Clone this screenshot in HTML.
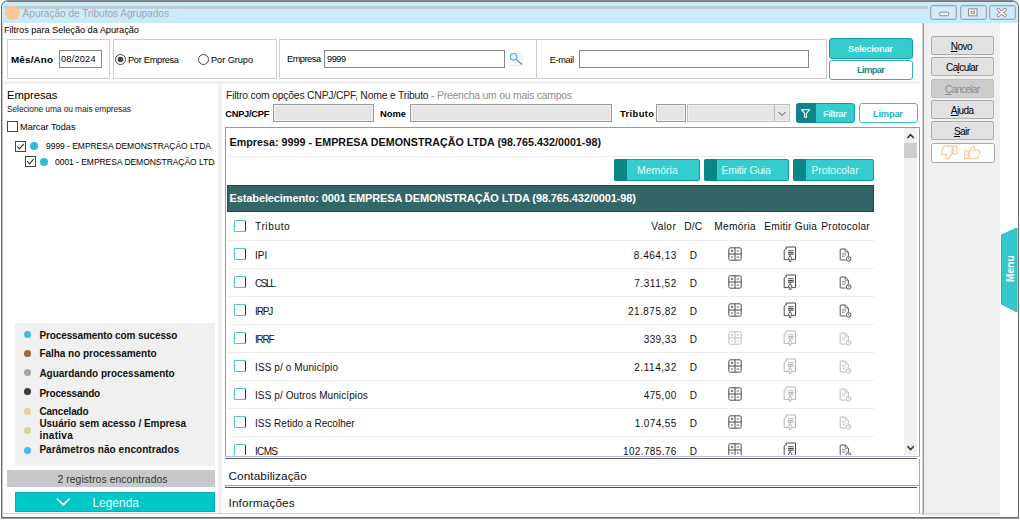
<!DOCTYPE html>
<html lang="pt-BR"><head><meta charset="utf-8"><title>Apuração de Tributos Agrupados</title>
<style>
html,body{margin:0;padding:0;background:#fff}
#w{position:relative;width:1020px;height:520px;overflow:hidden;font-family:'Liberation Sans', sans-serif}
#w div,#w svg,#w span{position:absolute}
#w span{white-space:nowrap;line-height:14px;height:14px}
#w u{text-decoration-thickness:1px;text-underline-offset:1px}
</style></head><body><div id="w">
<div style="left:1px;top:0px;width:1016px;height:516px;border:1px solid #6b6b6b;border-top-color:#8a8a8a;border-radius:7px 7px 0 0;background:#fff;box-sizing:content-box;box-shadow:inset 1px 0 0 #c4c4c4,inset 0 1px 0 #7a7a7a,0 1px 0 #9a9a9a"></div>
<div style="left:2px;top:2px;width:1016px;height:21px;background:#c9ecfc;border-radius:5px 5px 0 0"></div>
<div style="left:4px;top:6px;width:924px;height:3px;background:linear-gradient(#bfd0c0,#c4cfd0 70%,#c9c8ee)"></div>
<div style="left:5px;top:5.5px;width:14.5px;height:14.5px;background:#fdc795;border-radius:50%"></div>
<span style="left:22.6px;top:6.75px;font-size:10.2px;letter-spacing:-0.069px;color:#a3a7aa">Apuração de Tributos Agrupados</span>
<div style="left:930px;top:5px;width:27px;height:15px;border:1px solid #a3a3a3;border-radius:2.5px;box-sizing:border-box;background:#cfeafb;box-shadow:inset 0 0 0 1px #c4d6e0"></div>
<div style="left:960px;top:5px;width:27px;height:15px;border:1px solid #a3a3a3;border-radius:2.5px;box-sizing:border-box;background:#cfeafb;box-shadow:inset 0 0 0 1px #c4d6e0"></div>
<div style="left:989px;top:5px;width:27px;height:15px;border:1px solid #a3a3a3;border-radius:2.5px;box-sizing:border-box;background:#cfeafb;box-shadow:inset 0 0 0 1px #c4d6e0"></div>
<svg style="left:930px;top:5px" width="86" height="16" viewBox="0 0 86 16"><rect x="9.6" y="7.3" width="9" height="3.4" rx="1.4" fill="#fff" stroke="#8f8f8f" stroke-width="1.1"/><rect x="38.6" y="3.9" width="8.4" height="6.9" fill="#fff" stroke="#8f8f8f" stroke-width="1.1"/><rect x="41.2" y="6.2" width="3.4" height="2.4" fill="#d5e8f5" stroke="#8f8f8f" stroke-width=".9"/><path d="M68.3 4.6 L75.1 10.4 M75.1 4.6 L68.3 10.4" stroke="#8f8f8f" stroke-width="3.4" stroke-linecap="round"/><path d="M68.3 4.6 L75.1 10.4 M75.1 4.6 L68.3 10.4" stroke="#fff" stroke-width="1.5" stroke-linecap="round"/></svg>
<span style="left:4px;top:23.25px;font-size:9.3px;letter-spacing:-0.08px;color:#000">Filtros para Seleção da Apuração</span>
<div style="left:7px;top:39px;width:103px;height:40px;border:1px solid #cecece;box-sizing:border-box;background:#fff"></div>
<div style="left:113px;top:39px;width:164px;height:40px;border:1px solid #cecece;box-sizing:border-box;background:#fff"></div>
<div style="left:279px;top:39px;width:258px;height:40px;border:1px solid #cecece;box-sizing:border-box;background:#fff"></div>
<div style="left:536px;top:39px;width:291px;height:40px;border:1px solid #cecece;box-sizing:border-box;background:#fff"></div>
<span style="left:11px;top:52.75px;font-size:9.9px;letter-spacing:0.141px;font-weight:bold;color:#000">Mês/Ano</span>
<div style="left:59px;top:50px;width:43px;height:18px;border:1px solid #858585;box-sizing:border-box;background:#fff"></div>
<span style="left:61px;top:52.25px;font-size:9.2px;letter-spacing:0.214px;color:#000">08/2024</span>
<svg style="left:114px;top:53px" width="13" height="13"><circle cx="6.5" cy="6.5" r="5" fill="#fff" stroke="#444" stroke-width="1"/><circle cx="6.5" cy="6.5" r="2.8" fill="#444"/></svg>
<svg style="left:197px;top:53px" width="13" height="13"><circle cx="6.5" cy="6.5" r="5" fill="#fff" stroke="#444" stroke-width="1"/></svg>
<span style="left:128px;top:53.25px;font-size:9.2px;letter-spacing:-0.263px;color:#000">Por Empresa</span>
<span style="left:211px;top:53.25px;font-size:9.2px;letter-spacing:-0.049px;color:#000">Por Grupo</span>
<span style="left:287px;top:52.25px;font-size:9.2px;letter-spacing:-0.461px;color:#000">Empresa</span>
<div style="left:324px;top:50px;width:181px;height:18px;border:1px solid #858585;box-sizing:border-box;background:#fff"></div>
<span style="left:327px;top:52.25px;font-size:9.2px;letter-spacing:-0.484px;color:#000">9999</span>
<svg style="left:508px;top:51px" width="16" height="16" viewBox="0 0 16 16"><rect x="2.5" y="2.5" width="12" height="12" rx="1" fill="#f7f7f7" stroke="#ededed"/><circle cx="5.6" cy="5.8" r="3.3" fill="#d6f5fd" stroke="#62a8dc" stroke-width="1.1"/><path d="M8.2 8.4 L14 13.6" stroke="#8c8c8c" stroke-width="1.3"/></svg>
<span style="left:549.8px;top:53.25px;font-size:9.2px;letter-spacing:-0.369px;color:#000">E-mail</span>
<div style="left:579px;top:50px;width:230px;height:18px;border:1px solid #858585;box-sizing:border-box;background:#fff"></div>
<div style="left:829px;top:38px;width:84px;height:21px;background:#34cccc;border:1px solid #10a0a2;border-radius:3px;box-sizing:border-box"></div>
<span style="left:848px;top:41.75px;font-size:9.4px;letter-spacing:-0.269px;font-weight:bold;color:#f0ffff">Selecionar</span>
<div style="left:829px;top:60px;width:84px;height:20px;background:#fff;border:1px solid #33b5b8;border-radius:3px;box-sizing:border-box"></div>
<span style="left:857px;top:62.75px;font-size:9.4px;letter-spacing:-0.653px;font-weight:bold;color:#178a8c">Limpar</span>
<span style="left:7px;top:88.25px;font-size:11.3px;letter-spacing:-0.051px;color:#000">Empresas</span>
<span style="left:7px;top:102.25px;font-size:8.4px;letter-spacing:-0.074px;color:#222">Selecione uma ou mais empresas</span>
<div style="left:7px;top:121px;width:11px;height:11px;border:1px solid #444;box-sizing:border-box;background:#fff"></div>
<span style="left:20px;top:120.25px;font-size:9.2px;color:#000">Marcar Todas</span>
<div style="left:15px;top:141px;width:11px;height:11px;border:1px solid #444;box-sizing:border-box;background:#fff"></div>
<svg style="left:15px;top:141px" width="11" height="11"><path d="M2.3 5.4 L4.5 7.8 L8.8 2.8" fill="none" stroke="#333" stroke-width="1.1"/></svg>
<div style="left:25px;top:156px;width:11px;height:11px;border:1px solid #444;box-sizing:border-box;background:#fff"></div>
<svg style="left:25px;top:156px" width="11" height="11"><path d="M2.3 5.4 L4.5 7.8 L8.8 2.8" fill="none" stroke="#333" stroke-width="1.1"/></svg>
<div style="left:30px;top:142px;width:8px;height:8px;background:#30bad8;border-radius:50%"></div>
<div style="left:40px;top:158px;width:8px;height:8px;background:#30bad8;border-radius:50%"></div>
<span style="left:46px;top:139.25px;font-size:8.5px;letter-spacing:-0.036px;color:#000">9999 - EMPRESA DEMONSTRAÇÃO LTDA</span>
<span style="left:55px;top:155.25px;font-size:8.5px;letter-spacing:-0.036px;color:#000">0001 - EMPRESA DEMONSTRAÇÃO LTDA</span>
<div style="left:215px;top:84px;width:3px;height:100px;background:#fff"></div>
<div style="left:15px;top:323px;width:200px;height:143px;background:#f0f0f0"></div>
<div style="left:24px;top:331px;width:7px;height:7px;background:#3bbcd8;border-radius:50%"></div>
<span style="left:39.4px;top:328.75px;font-size:10px;letter-spacing:-0.109px;font-weight:bold;color:#111">Processamento com sucesso</span>
<div style="left:24px;top:350px;width:7px;height:7px;background:#a0662d;border-radius:50%"></div>
<span style="left:39.4px;top:346.75px;font-size:10px;letter-spacing:-0.029px;font-weight:bold;color:#111">Falha no processamento</span>
<div style="left:24px;top:369px;width:7px;height:7px;background:#a6a6a6;border-radius:50%"></div>
<span style="left:39.4px;top:366.75px;font-size:10px;letter-spacing:-0.013px;font-weight:bold;color:#111">Aguardando processamento</span>
<div style="left:24px;top:388px;width:7px;height:7px;background:#3a3a3a;border-radius:50%"></div>
<span style="left:39.4px;top:386.75px;font-size:10px;letter-spacing:-0.201px;font-weight:bold;color:#111">Processando</span>
<div style="left:24px;top:408px;width:7px;height:7px;background:#ddd29e;border-radius:50%"></div>
<span style="left:39.4px;top:404.75px;font-size:10px;letter-spacing:-0.172px;font-weight:bold;color:#111">Cancelado</span>
<div style="left:24px;top:427px;width:7px;height:7px;background:#ddd29e;border-radius:50%"></div>
<div style="left:24px;top:447px;width:7px;height:7px;background:#40b8ff;border-radius:50%"></div>
<span style="left:39.4px;top:442.75px;font-size:10px;letter-spacing:0.057px;font-weight:bold;color:#111">Parâmetros não encontrados</span>
<span style="left:39.4px;top:416.75px;font-size:10px;letter-spacing:-0.026px;font-weight:bold;color:#111">Usuário sem acesso / Empresa</span>
<span style="left:39.4px;top:428.75px;font-size:10px;letter-spacing:0.285px;font-weight:bold;color:#111">inativa</span>
<div style="left:7px;top:470px;width:208px;height:17px;background:#c8c8c8"></div>
<span style="left:57.4px;top:472.75px;font-size:10.3px;letter-spacing:0.113px;color:#333">2 registros encontrados</span>
<div style="left:15px;top:492px;width:200px;height:20px;background:#00c8c8;border:1px solid #12a9ab;box-sizing:border-box"></div>
<svg style="left:55px;top:496px" width="17" height="13"><path d="M2 2.6 L8.3 8.8 L14.6 2.6" fill="none" stroke="#fff" stroke-width="1.8"/></svg>
<span style="left:92.4px;top:496.25px;font-size:12px;letter-spacing:-0.02px;color:#e4ffff">Legenda</span>
<div style="left:4px;top:81px;width:918px;height:3px;background:#f0f0f0"></div>
<div style="left:218px;top:83px;width:4px;height:431px;background:#f0f0f0"></div>
<span style="left:226px;top:88.75px;font-size:10.4px;letter-spacing:-0.213px;color:#222">Filtro com opções CNPJ/CPF, Nome e Tributo <span style="position:static;color:#8e8e8e">- Preencha um ou mais campos</span></span>
<span style="left:225.2px;top:107.25px;font-size:9.3px;letter-spacing:-0.241px;font-weight:bold;color:#000">CNPJ/CPF</span>
<div style="left:273px;top:104px;width:101px;height:18px;border:1px solid #989898;box-sizing:border-box;background:#e5e5e5;box-shadow:inset 0 0 0 1px #f3f3f3"></div>
<span style="left:380px;top:107.25px;font-size:9.3px;letter-spacing:0.052px;font-weight:bold;color:#000">Nome</span>
<div style="left:410px;top:104px;width:202px;height:18px;border:1px solid #989898;box-sizing:border-box;background:#e5e5e5;box-shadow:inset 0 0 0 1px #f3f3f3"></div>
<span style="left:620px;top:107.25px;font-size:9.3px;letter-spacing:0.417px;font-weight:bold;color:#000">Tributo</span>
<div style="left:656px;top:104px;width:30px;height:18px;border:1px solid #989898;box-sizing:border-box;background:#e5e5e5;box-shadow:inset 0 0 0 1px #f3f3f3"></div>
<div style="left:687px;top:104px;width:103px;height:18px;border:1px solid #bdbdbd;box-sizing:border-box;background:#e5e5e5;box-shadow:inset 0 0 0 1px #f0f0f0"></div>
<div style="left:774px;top:105px;width:1px;height:16px;background:#bdbdbd"></div>
<svg style="left:776px;top:108px" width="12" height="11"><path d="M2.5 4 L6 7.5 L9.5 4" fill="none" stroke="#555" stroke-width="1"/></svg>
<div style="left:796px;top:103px;width:59px;height:20px;background:#34cccc;border:1px solid #10a0a2;border-radius:3px;box-sizing:border-box"></div>
<div style="left:796px;top:103px;width:20px;height:20px;background:#0e8689;border-radius:3px 0 0 3px"></div>
<svg style="left:800px;top:108px" width="12" height="12"><path d="M1.6 1.6 H9.6 L6.5 5.6 V9.2 H4.7 V5.6 Z" fill="none" stroke="#fff" stroke-width="1.1" stroke-linejoin="round"/></svg>
<span style="left:823px;top:106.75px;font-size:9.4px;letter-spacing:-0.48px;font-weight:bold;color:#dcfbfb">Filtrar</span>
<div style="left:859px;top:103px;width:59px;height:20px;background:#fff;border:1px solid #35bccb;border-radius:3px;box-sizing:border-box"></div>
<span style="left:873px;top:106.75px;font-size:9.4px;letter-spacing:-0.253px;font-weight:bold;color:#28b0c8">Limpar</span>
<div style="left:225px;top:127px;width:695px;height:332px;background:#fff;border:1px solid #9a9a9a;border-bottom:1px solid #5a5a9a;box-sizing:border-box"></div>
<span style="left:229.5px;top:135.25px;font-size:10.7px;letter-spacing:0.04px;font-weight:bold;color:#111">Empresa: 9999 - EMPRESA DEMONSTRAÇÃO LTDA (98.765.432/0001-98)</span>
<div style="left:228px;top:156px;width:646px;height:1px;background:#ececec"></div>
<div style="left:614px;top:159px;width:86px;height:22px;background:#34cccc;border:1px solid #10a0a2;border-radius:2px;box-sizing:border-box"></div>
<div style="left:614px;top:159px;width:13px;height:22px;background:#088688;border-radius:2px 0 0 2px"></div>
<span style="left:637px;top:163.75px;font-size:10.4px;letter-spacing:0.046px;color:#e0fdfd">Memória</span>
<div style="left:704px;top:159px;width:85px;height:22px;background:#34cccc;border:1px solid #10a0a2;border-radius:2px;box-sizing:border-box"></div>
<div style="left:704px;top:159px;width:13px;height:22px;background:#088688;border-radius:2px 0 0 2px"></div>
<span style="left:721.6px;top:163.75px;font-size:10.4px;letter-spacing:-0.229px;color:#e0fdfd">Emitir Guia</span>
<div style="left:793px;top:159px;width:81px;height:22px;background:#34cccc;border:1px solid #10a0a2;border-radius:2px;box-sizing:border-box"></div>
<div style="left:793px;top:159px;width:13px;height:22px;background:#088688;border-radius:2px 0 0 2px"></div>
<span style="left:811.4px;top:163.75px;font-size:10.4px;letter-spacing:-0.018px;color:#e0fdfd">Protocolar</span>
<div style="left:227px;top:185px;width:647px;height:27px;background:#336666;border:1px solid #1d4848;box-sizing:border-box"></div>
<span style="left:229.5px;top:191.25px;font-size:11px;letter-spacing:-0.113px;font-weight:bold;color:#fff">Estabelecimento: 0001 EMPRESA DEMONSTRAÇÃO LTDA (98.765.432/0001-98)</span>
<div style="left:234px;top:220px;width:12px;height:12px;border:1px solid #52bdf0;border-right-color:#334;border-radius:1.5px;box-sizing:border-box;background:#fff"></div>
<span style="left:255px;top:219.75px;font-size:10.2px;letter-spacing:0.562px;color:#111">Tributo</span>
<span style="left:651.3px;top:219.75px;font-size:10.2px;letter-spacing:0.367px;color:#111">Valor</span>
<span style="left:684.2px;top:219.75px;font-size:10.2px;letter-spacing:0.127px;color:#111">D/C</span>
<span style="left:714.2px;top:219.75px;font-size:10.2px;letter-spacing:0.327px;color:#111">Memória</span>
<span style="left:764.2px;top:219.75px;font-size:10.2px;letter-spacing:0.241px;color:#111">Emitir Guia</span>
<span style="left:821.3px;top:219.75px;font-size:10.2px;letter-spacing:0.218px;color:#111">Protocolar</span>
<div style="left:228px;top:240px;width:646px;height:1px;background:#ececec"></div>
<div style="left:234px;top:248px;width:12px;height:12px;border:1px solid #52bdf0;border-right-color:#334;border-radius:1.5px;box-sizing:border-box;background:#fff"></div>
<span style="left:255px;top:248.75px;font-size:10px;letter-spacing:-0.017px;color:#111">IPI</span>
<span style="left:633.8px;top:248.75px;font-size:10px;letter-spacing:0.509px;color:#111">8.464,13</span>
<span style="left:689.7px;top:248.75px;font-size:10px;color:#111">D</span>
<svg style="left:728px;top:247px;opacity:1" width="14" height="14" viewBox="0 0 14 14" fill="none" stroke="#4a4a4a" stroke-width="1"><rect x=".8" y=".8" width="12.4" height="12.4" rx="1.6"/><path d="M7 .8V13.2M.8 7H13.2"/><path d="M2.8 4h2.4M4 2.8v2.4M8.8 4h2.4M8.8 10h2.4M2.8 10h2.4" stroke-width=".9"/></svg>
<svg style="left:783px;top:246px;opacity:1" width="14" height="16" viewBox="0 0 14 16" fill="none" stroke="#4a4a4a" stroke-width="1"><path d="M3.2 3.2V1h9.3v12.6H9.2"/><path d="M5.4 13.6H1.2V4.2L3.2 2.6"/><path d="M5 4.8h5.6M5 6.6h5.6M5 8.2h5.6" stroke-width="1.1"/><path d="M7.2 9.2 L9.2 13.2 H8 V15.4 H6.4 V13.2 H5.2 Z" fill="#fff" stroke-width=".9"/></svg>
<svg style="left:839px;top:248px;opacity:1" width="14" height="15" viewBox="0 0 14 15" fill="none" stroke="#555" stroke-width="1"><path d="M6.6 12H2Q1.2 12 1.2 11.2V1.8Q1.2 1 2 1H6.2L9.4 4.2V7.8"/><path d="M6.2 1V4.2H9.4" stroke-width=".7"/><path d="M3 5.4h3.6M3 7h4.6M3 8.6h3" stroke-width=".8" stroke="#8a8a8a"/><circle cx="9.6" cy="10.8" r="2.3" fill="#fff"/><path d="M9.6 9.6v1.4h.9" stroke-width=".8"/></svg>
<div style="left:228px;top:268px;width:646px;height:1px;background:#ececec"></div>
<div style="left:234px;top:276px;width:12px;height:12px;border:1px solid #52bdf0;border-right-color:#334;border-radius:1.5px;box-sizing:border-box;background:#fff"></div>
<span style="left:255px;top:276.75px;font-size:10px;letter-spacing:-1.405px;color:#111">CSLL</span>
<span style="left:634.2px;top:276.75px;font-size:10px;letter-spacing:0.559px;color:#111">7.311,52</span>
<span style="left:689.7px;top:276.75px;font-size:10px;color:#111">D</span>
<svg style="left:728px;top:275px;opacity:1" width="14" height="14" viewBox="0 0 14 14" fill="none" stroke="#4a4a4a" stroke-width="1"><rect x=".8" y=".8" width="12.4" height="12.4" rx="1.6"/><path d="M7 .8V13.2M.8 7H13.2"/><path d="M2.8 4h2.4M4 2.8v2.4M8.8 4h2.4M8.8 10h2.4M2.8 10h2.4" stroke-width=".9"/></svg>
<svg style="left:783px;top:274px;opacity:1" width="14" height="16" viewBox="0 0 14 16" fill="none" stroke="#4a4a4a" stroke-width="1"><path d="M3.2 3.2V1h9.3v12.6H9.2"/><path d="M5.4 13.6H1.2V4.2L3.2 2.6"/><path d="M5 4.8h5.6M5 6.6h5.6M5 8.2h5.6" stroke-width="1.1"/><path d="M7.2 9.2 L9.2 13.2 H8 V15.4 H6.4 V13.2 H5.2 Z" fill="#fff" stroke-width=".9"/></svg>
<svg style="left:839px;top:276px;opacity:1" width="14" height="15" viewBox="0 0 14 15" fill="none" stroke="#555" stroke-width="1"><path d="M6.6 12H2Q1.2 12 1.2 11.2V1.8Q1.2 1 2 1H6.2L9.4 4.2V7.8"/><path d="M6.2 1V4.2H9.4" stroke-width=".7"/><path d="M3 5.4h3.6M3 7h4.6M3 8.6h3" stroke-width=".8" stroke="#8a8a8a"/><circle cx="9.6" cy="10.8" r="2.3" fill="#fff"/><path d="M9.6 9.6v1.4h.9" stroke-width=".8"/></svg>
<div style="left:228px;top:296px;width:646px;height:1px;background:#ececec"></div>
<div style="left:234px;top:304px;width:12px;height:12px;border:1px solid #52bdf0;border-right-color:#334;border-radius:1.5px;box-sizing:border-box;background:#fff"></div>
<span style="left:255px;top:304.75px;font-size:10px;letter-spacing:-1.124px;color:#111">IRPJ</span>
<span style="left:628px;top:304.75px;font-size:10px;letter-spacing:0.475px;color:#111">21.875,82</span>
<span style="left:689.7px;top:304.75px;font-size:10px;color:#111">D</span>
<svg style="left:728px;top:303px;opacity:1" width="14" height="14" viewBox="0 0 14 14" fill="none" stroke="#4a4a4a" stroke-width="1"><rect x=".8" y=".8" width="12.4" height="12.4" rx="1.6"/><path d="M7 .8V13.2M.8 7H13.2"/><path d="M2.8 4h2.4M4 2.8v2.4M8.8 4h2.4M8.8 10h2.4M2.8 10h2.4" stroke-width=".9"/></svg>
<svg style="left:783px;top:302px;opacity:1" width="14" height="16" viewBox="0 0 14 16" fill="none" stroke="#4a4a4a" stroke-width="1"><path d="M3.2 3.2V1h9.3v12.6H9.2"/><path d="M5.4 13.6H1.2V4.2L3.2 2.6"/><path d="M5 4.8h5.6M5 6.6h5.6M5 8.2h5.6" stroke-width="1.1"/><path d="M7.2 9.2 L9.2 13.2 H8 V15.4 H6.4 V13.2 H5.2 Z" fill="#fff" stroke-width=".9"/></svg>
<svg style="left:839px;top:304px;opacity:1" width="14" height="15" viewBox="0 0 14 15" fill="none" stroke="#555" stroke-width="1"><path d="M6.6 12H2Q1.2 12 1.2 11.2V1.8Q1.2 1 2 1H6.2L9.4 4.2V7.8"/><path d="M6.2 1V4.2H9.4" stroke-width=".7"/><path d="M3 5.4h3.6M3 7h4.6M3 8.6h3" stroke-width=".8" stroke="#8a8a8a"/><circle cx="9.6" cy="10.8" r="2.3" fill="#fff"/><path d="M9.6 9.6v1.4h.9" stroke-width=".8"/></svg>
<div style="left:228px;top:324px;width:646px;height:1px;background:#ececec"></div>
<div style="left:234px;top:332px;width:12px;height:12px;border:1px solid #52bdf0;border-right-color:#334;border-radius:1.5px;box-sizing:border-box;background:#fff"></div>
<span style="left:255px;top:332.75px;font-size:10px;letter-spacing:-1.215px;color:#111">IRRF</span>
<span style="left:643.7px;top:332.75px;font-size:10px;letter-spacing:0.401px;color:#111">339,33</span>
<span style="left:689.7px;top:332.75px;font-size:10px;color:#111">D</span>
<svg style="left:728px;top:331px;opacity:0.35" width="14" height="14" viewBox="0 0 14 14" fill="none" stroke="#4a4a4a" stroke-width="1"><rect x=".8" y=".8" width="12.4" height="12.4" rx="1.6"/><path d="M7 .8V13.2M.8 7H13.2"/><path d="M2.8 4h2.4M4 2.8v2.4M8.8 4h2.4M8.8 10h2.4M2.8 10h2.4" stroke-width=".9"/></svg>
<svg style="left:783px;top:330px;opacity:0.4" width="14" height="16" viewBox="0 0 14 16" fill="none" stroke="#4a4a4a" stroke-width="1"><path d="M3.2 3.2V1h9.3v12.6H9.2"/><path d="M5.4 13.6H1.2V4.2L3.2 2.6"/><path d="M5 4.8h5.6M5 6.6h5.6M5 8.2h5.6" stroke-width="1.1"/><path d="M7.2 9.2 L9.2 13.2 H8 V15.4 H6.4 V13.2 H5.2 Z" fill="#fff" stroke-width=".9"/></svg>
<svg style="left:839px;top:332px;opacity:0.4" width="14" height="15" viewBox="0 0 14 15" fill="none" stroke="#555" stroke-width="1"><path d="M6.6 12H2Q1.2 12 1.2 11.2V1.8Q1.2 1 2 1H6.2L9.4 4.2V7.8"/><path d="M6.2 1V4.2H9.4" stroke-width=".7"/><path d="M3 5.4h3.6M3 7h4.6M3 8.6h3" stroke-width=".8" stroke="#8a8a8a"/><circle cx="9.6" cy="10.8" r="2.3" fill="#fff"/><path d="M9.6 9.6v1.4h.9" stroke-width=".8"/></svg>
<div style="left:228px;top:352px;width:646px;height:1px;background:#ececec"></div>
<div style="left:234px;top:360px;width:12px;height:12px;border:1px solid #52bdf0;border-right-color:#334;border-radius:1.5px;box-sizing:border-box;background:#fff"></div>
<span style="left:255px;top:360.75px;font-size:10px;letter-spacing:0.108px;color:#111">ISS p/ o Município</span>
<span style="left:634.2px;top:360.75px;font-size:10px;letter-spacing:0.559px;color:#111">2.114,32</span>
<span style="left:689.7px;top:360.75px;font-size:10px;color:#111">D</span>
<svg style="left:728px;top:359px;opacity:1" width="14" height="14" viewBox="0 0 14 14" fill="none" stroke="#4a4a4a" stroke-width="1"><rect x=".8" y=".8" width="12.4" height="12.4" rx="1.6"/><path d="M7 .8V13.2M.8 7H13.2"/><path d="M2.8 4h2.4M4 2.8v2.4M8.8 4h2.4M8.8 10h2.4M2.8 10h2.4" stroke-width=".9"/></svg>
<svg style="left:783px;top:358px;opacity:0.4" width="14" height="16" viewBox="0 0 14 16" fill="none" stroke="#4a4a4a" stroke-width="1"><path d="M3.2 3.2V1h9.3v12.6H9.2"/><path d="M5.4 13.6H1.2V4.2L3.2 2.6"/><path d="M5 4.8h5.6M5 6.6h5.6M5 8.2h5.6" stroke-width="1.1"/><path d="M7.2 9.2 L9.2 13.2 H8 V15.4 H6.4 V13.2 H5.2 Z" fill="#fff" stroke-width=".9"/></svg>
<svg style="left:839px;top:360px;opacity:0.4" width="14" height="15" viewBox="0 0 14 15" fill="none" stroke="#555" stroke-width="1"><path d="M6.6 12H2Q1.2 12 1.2 11.2V1.8Q1.2 1 2 1H6.2L9.4 4.2V7.8"/><path d="M6.2 1V4.2H9.4" stroke-width=".7"/><path d="M3 5.4h3.6M3 7h4.6M3 8.6h3" stroke-width=".8" stroke="#8a8a8a"/><circle cx="9.6" cy="10.8" r="2.3" fill="#fff"/><path d="M9.6 9.6v1.4h.9" stroke-width=".8"/></svg>
<div style="left:228px;top:380px;width:646px;height:1px;background:#ececec"></div>
<div style="left:234px;top:388px;width:12px;height:12px;border:1px solid #52bdf0;border-right-color:#334;border-radius:1.5px;box-sizing:border-box;background:#fff"></div>
<span style="left:255px;top:388.75px;font-size:10px;letter-spacing:0.095px;color:#111">ISS p/ Outros Municípios</span>
<span style="left:643.7px;top:388.75px;font-size:10px;letter-spacing:0.401px;color:#111">475,00</span>
<span style="left:689.7px;top:388.75px;font-size:10px;color:#111">D</span>
<svg style="left:728px;top:387px;opacity:1" width="14" height="14" viewBox="0 0 14 14" fill="none" stroke="#4a4a4a" stroke-width="1"><rect x=".8" y=".8" width="12.4" height="12.4" rx="1.6"/><path d="M7 .8V13.2M.8 7H13.2"/><path d="M2.8 4h2.4M4 2.8v2.4M8.8 4h2.4M8.8 10h2.4M2.8 10h2.4" stroke-width=".9"/></svg>
<svg style="left:783px;top:386px;opacity:0.4" width="14" height="16" viewBox="0 0 14 16" fill="none" stroke="#4a4a4a" stroke-width="1"><path d="M3.2 3.2V1h9.3v12.6H9.2"/><path d="M5.4 13.6H1.2V4.2L3.2 2.6"/><path d="M5 4.8h5.6M5 6.6h5.6M5 8.2h5.6" stroke-width="1.1"/><path d="M7.2 9.2 L9.2 13.2 H8 V15.4 H6.4 V13.2 H5.2 Z" fill="#fff" stroke-width=".9"/></svg>
<svg style="left:839px;top:388px;opacity:0.4" width="14" height="15" viewBox="0 0 14 15" fill="none" stroke="#555" stroke-width="1"><path d="M6.6 12H2Q1.2 12 1.2 11.2V1.8Q1.2 1 2 1H6.2L9.4 4.2V7.8"/><path d="M6.2 1V4.2H9.4" stroke-width=".7"/><path d="M3 5.4h3.6M3 7h4.6M3 8.6h3" stroke-width=".8" stroke="#8a8a8a"/><circle cx="9.6" cy="10.8" r="2.3" fill="#fff"/><path d="M9.6 9.6v1.4h.9" stroke-width=".8"/></svg>
<div style="left:228px;top:408px;width:646px;height:1px;background:#ececec"></div>
<div style="left:234px;top:416px;width:12px;height:12px;border:1px solid #52bdf0;border-right-color:#334;border-radius:1.5px;box-sizing:border-box;background:#fff"></div>
<span style="left:255px;top:416.75px;font-size:10px;letter-spacing:0.037px;color:#111">ISS Retido a Recolher</span>
<span style="left:634.7px;top:416.75px;font-size:10px;letter-spacing:0.38px;color:#111">1.074,55</span>
<span style="left:689.7px;top:416.75px;font-size:10px;color:#111">D</span>
<svg style="left:728px;top:415px;opacity:1" width="14" height="14" viewBox="0 0 14 14" fill="none" stroke="#4a4a4a" stroke-width="1"><rect x=".8" y=".8" width="12.4" height="12.4" rx="1.6"/><path d="M7 .8V13.2M.8 7H13.2"/><path d="M2.8 4h2.4M4 2.8v2.4M8.8 4h2.4M8.8 10h2.4M2.8 10h2.4" stroke-width=".9"/></svg>
<svg style="left:783px;top:414px;opacity:0.4" width="14" height="16" viewBox="0 0 14 16" fill="none" stroke="#4a4a4a" stroke-width="1"><path d="M3.2 3.2V1h9.3v12.6H9.2"/><path d="M5.4 13.6H1.2V4.2L3.2 2.6"/><path d="M5 4.8h5.6M5 6.6h5.6M5 8.2h5.6" stroke-width="1.1"/><path d="M7.2 9.2 L9.2 13.2 H8 V15.4 H6.4 V13.2 H5.2 Z" fill="#fff" stroke-width=".9"/></svg>
<svg style="left:839px;top:416px;opacity:0.4" width="14" height="15" viewBox="0 0 14 15" fill="none" stroke="#555" stroke-width="1"><path d="M6.6 12H2Q1.2 12 1.2 11.2V1.8Q1.2 1 2 1H6.2L9.4 4.2V7.8"/><path d="M6.2 1V4.2H9.4" stroke-width=".7"/><path d="M3 5.4h3.6M3 7h4.6M3 8.6h3" stroke-width=".8" stroke="#8a8a8a"/><circle cx="9.6" cy="10.8" r="2.3" fill="#fff"/><path d="M9.6 9.6v1.4h.9" stroke-width=".8"/></svg>
<div style="left:228px;top:436px;width:646px;height:1px;background:#ececec"></div>
<div style="left:234px;top:444px;width:12px;height:12px;border:1px solid #52bdf0;border-right-color:#334;border-radius:1.5px;box-sizing:border-box;background:#fff"></div>
<span style="left:255px;top:444.75px;font-size:10px;letter-spacing:-0.667px;color:#111">ICMS</span>
<span style="left:623px;top:444.75px;font-size:10px;letter-spacing:0.36px;color:#111">102.785,76</span>
<span style="left:689.7px;top:444.75px;font-size:10px;color:#111">D</span>
<svg style="left:728px;top:443px;opacity:1" width="14" height="14" viewBox="0 0 14 14" fill="none" stroke="#4a4a4a" stroke-width="1"><rect x=".8" y=".8" width="12.4" height="12.4" rx="1.6"/><path d="M7 .8V13.2M.8 7H13.2"/><path d="M2.8 4h2.4M4 2.8v2.4M8.8 4h2.4M8.8 10h2.4M2.8 10h2.4" stroke-width=".9"/></svg>
<svg style="left:783px;top:442px;opacity:1" width="14" height="16" viewBox="0 0 14 16" fill="none" stroke="#4a4a4a" stroke-width="1"><path d="M3.2 3.2V1h9.3v12.6H9.2"/><path d="M5.4 13.6H1.2V4.2L3.2 2.6"/><path d="M5 4.8h5.6M5 6.6h5.6M5 8.2h5.6" stroke-width="1.1"/><path d="M7.2 9.2 L9.2 13.2 H8 V15.4 H6.4 V13.2 H5.2 Z" fill="#fff" stroke-width=".9"/></svg>
<svg style="left:839px;top:444px;opacity:1" width="14" height="15" viewBox="0 0 14 15" fill="none" stroke="#555" stroke-width="1"><path d="M6.6 12H2Q1.2 12 1.2 11.2V1.8Q1.2 1 2 1H6.2L9.4 4.2V7.8"/><path d="M6.2 1V4.2H9.4" stroke-width=".7"/><path d="M3 5.4h3.6M3 7h4.6M3 8.6h3" stroke-width=".8" stroke="#8a8a8a"/><circle cx="9.6" cy="10.8" r="2.3" fill="#fff"/><path d="M9.6 9.6v1.4h.9" stroke-width=".8"/></svg>
<div style="left:904px;top:128px;width:13px;height:329px;background:#f0f0f0"></div>
<div style="left:904px;top:143px;width:13px;height:15px;background:#cdcdcd"></div>
<svg style="left:903px;top:128px" width="15" height="330"><path d="M4.4 10 L7.6 6.7 L10.8 10" fill="none" stroke="#333" stroke-width="1.6"/><path d="M4.4 318.3 L7.6 321.6 L10.8 318.3" fill="none" stroke="#333" stroke-width="1.6"/></svg>
<div style="left:222px;top:455px;width:698px;height:59px;background:#fff"></div>
<div style="left:225px;top:456px;width:695px;height:1px;background:#bdbdbd"></div>
<div style="left:225px;top:455px;width:1px;height:1px;background:#9a9a9a"></div>
<div style="left:919px;top:455px;width:1px;height:1px;background:#9a9a9a"></div>
<div style="left:225px;top:458px;width:692px;height:1px;background:#55559a"></div>
<div style="left:225px;top:485px;width:694px;height:1px;background:#a0a0a0"></div>
<div style="left:225px;top:487px;width:692px;height:1px;background:#4a4a4a"></div>
<div style="left:919px;top:459px;width:1px;height:55px;background:#a8a8a8"></div>
<span style="left:228.5px;top:469.25px;font-size:11.8px;letter-spacing:0.07px;color:#111">Contabilização</span>
<span style="left:228.5px;top:496.25px;font-size:11.8px;letter-spacing:0.128px;color:#111">Informações</span>
<div style="left:920px;top:23px;width:2px;height:494px;background:#fff"></div>
<div style="left:922px;top:23px;width:1px;height:492px;background:#c8c8c8"></div>
<div style="left:923px;top:23px;width:1px;height:492px;background:#9c9c9c"></div>
<div style="left:924px;top:23px;width:76px;height:493px;background:#f0f0f0"></div>
<div style="left:1000px;top:23px;width:18px;height:494px;background:#fff"></div>
<div style="left:2px;top:513px;width:998px;height:1px;background:#d4d4d4"></div>
<div style="left:931px;top:36px;width:63px;height:19px;background:#e1e1e1;border:1px solid #adadad;box-sizing:border-box;border-radius:2px"></div>
<span style="left:950.8px;top:39.75px;font-size:10px;letter-spacing:-0.553px;color:#000"><u>N</u>ovo</span>
<div style="left:931px;top:57px;width:63px;height:19px;background:#e1e1e1;border:1px solid #adadad;box-sizing:border-box;border-radius:2px"></div>
<span style="left:946px;top:60.75px;font-size:10px;letter-spacing:-0.588px;color:#000">Ca<u>l</u>cular</span>
<div style="left:931px;top:79px;width:63px;height:19px;background:#cccccc;border:1px solid #bfbfbf;box-sizing:border-box;border-radius:2px"></div>
<span style="left:945px;top:82.75px;font-size:10px;letter-spacing:-0.721px;color:#8c8c8c"><u>C</u>ancelar</span>
<div style="left:931px;top:100px;width:63px;height:19px;background:#e1e1e1;border:1px solid #adadad;box-sizing:border-box;border-radius:2px"></div>
<span style="left:950.8px;top:103.75px;font-size:10px;letter-spacing:-0.595px;color:#000"><u>A</u>juda</span>
<div style="left:931px;top:121px;width:63px;height:19px;background:#e1e1e1;border:1px solid #adadad;box-sizing:border-box;border-radius:2px"></div>
<span style="left:954px;top:124.75px;font-size:10px;letter-spacing:-0.599px;color:#000"><u>S</u>air</span>
<div style="left:931px;top:143px;width:64px;height:20px;background:#fff;border:1px solid #a8a8a8;box-sizing:border-box;border-radius:2.5px"></div>
<svg style="left:940px;top:145px" width="48" height="17" viewBox="0 0 48 17" fill="none" stroke="#f9c9a2" stroke-width="1.05" stroke-linejoin="round"><g transform="translate(-0.2,-1.7) scale(1.17)"><path d="M10.5 2.5 h-6 q-1.5 0 -2 1.5 l-1 4 q-.3 1.6 1.4 1.6 h3.2 l-.5 2.6 q0 1.6 1.6 1.2 l3.3-4.6 z"/><rect x="11.5" y="2.5" width="3" height="6.8"/></g><g transform="translate(21.8,-1.9) scale(1.15)"><path d="M6.5 13.5 h6 q1.5 0 2-1.5 l1-4 q.3-1.6-1.4-1.6 h-3.2 l.5-2.6 q0-1.6-1.6-1.2 l-3.3 4.6 z"/><rect x="2.5" y="6.7" width="3" height="6.8"/></g></svg>
<svg style="left:1000px;top:226px" width="18" height="88" viewBox="0 0 18 88"><path d="M1.5 9 L17 2 V86 L1.5 78 Z" fill="#34c8ca" stroke="#2ab4b8" stroke-width="1"/><text x="0" y="0" transform="translate(13.9,56.2) rotate(-90)" font-family="Liberation Sans, sans-serif" font-size="10.3" font-weight="bold" fill="#fff">Menu</text></svg>
</div></body></html>
